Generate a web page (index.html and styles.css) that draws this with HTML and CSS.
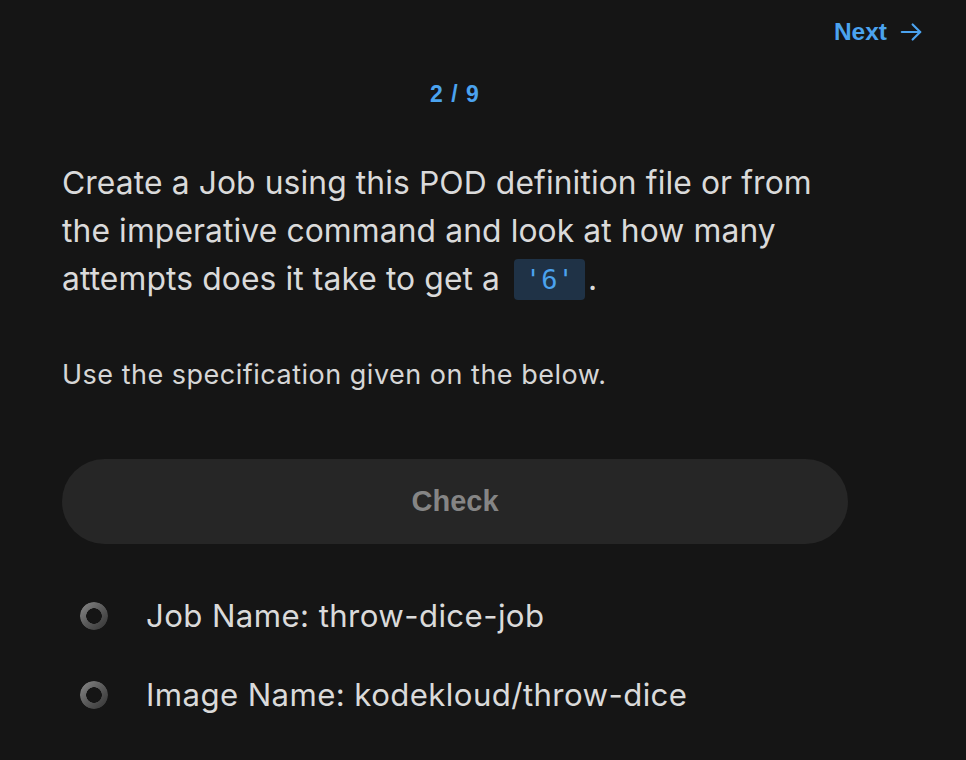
FILE: index.html
```html
<!DOCTYPE html>
<html lang="en">
<head>
<meta charset="utf-8">
<title>Question 2 / 9</title>
<link rel="stylesheet" href="styles.css">
</head>
<body>
<div class="topbar">
  <a class="next" href="#">Next
    <svg class="arrow" width="26" height="26" viewBox="0 0 24 24" fill="none" stroke="currentColor" stroke-width="2" stroke-linecap="round" stroke-linejoin="round"><path d="M3.5 12h17"/><path d="M13.5 5l7 7-7 7"/></svg>
  </a>
</div>
<main class="content">
  <div class="counter">2 / 9</div>
  <p class="question">Create a Job using this POD definition file or from the imperative command and look at how many attempts does it take to get a <code class="chip">'6'</code>.</p>
  <p class="note">Use the specification given on the below.</p>
  <button class="check" type="button">Check</button>
  <ul class="tasks">
    <li class="task"><span class="ring"></span><span>Job Name: throw-dice-job</span></li>
    <li class="task"><span class="ring"></span><span>Image Name: kodekloud/throw-dice</span></li>
  </ul>
</main>
</body>
</html>
```

FILE: styles.css
```css
html, body {
  margin: 0;
  padding: 0;
  background: #151515;
  height: 100%;
}
body {
  font-family: Inter, "Noto Sans", sans-serif;
  color: #d9d9d9;
  overflow: hidden;
}
.topbar {
  display: flex;
  justify-content: flex-end;
  padding: 16px 42px 0 0;
  height: 32px;
}
.next {
  display: flex;
  align-items: center;
  gap: 11px;
  color: #4ba3ef;
  text-decoration: none;
  font-family: "Liberation Sans", Arial, sans-serif;
  font-weight: 700;
  font-size: 24.5px;
}
.content {
  width: 786px;
  margin-left: 62px;
}
.counter {
  margin-top: 33px;
  text-align: center;
  color: #4ba3ef;
  font-family: "Liberation Sans", Arial, sans-serif;
  font-weight: 700;
  font-size: 23px;
  letter-spacing: 1px;
}
.question {
  margin: 51px 0 0 0;
  font-size: 31.8px;
  letter-spacing: 0.1px;
  line-height: 48px;
  color: #dadada;
}
.chip {
  display: inline-block;
  margin: 0 3px 0 5px;
  background: #1f3246;
  color: #4ba3ef;
  font-family: "DejaVu Sans Mono", monospace;
  font-size: 27px;
  letter-spacing: 0;
  line-height: 41px;
  padding: 0 11px;
  border-radius: 4px;
  vertical-align: 1px;
}
.note {
  margin: 54px 0 0 0;
  font-size: 27px;
  letter-spacing: 0.5px;
  line-height: 36px;
  color: #d6d6d6;
}
.check {
  display: block;
  width: 786px;
  height: 85px;
  margin-top: 66px;
  border: none;
  border-radius: 43px;
  background: #262626;
  color: #858585;
  font-family: "Liberation Sans", Arial, sans-serif;
  font-weight: 700;
  font-size: 29px;
}
.tasks {
  list-style: none;
  margin: 48px 0 0 0;
  padding: 0;
}
.task {
  display: flex;
  align-items: center;
  gap: 38px;
  height: 48px;
  margin-bottom: 31px;
  padding-left: 18px;
  font-size: 31.2px;
  letter-spacing: 0.4px;
  color: #dadada;
}
.ring {
  flex: none;
  width: 28px;
  height: 28px;
  border-radius: 50%;
  background: linear-gradient(135deg, #8a8a8a 0%, #5a5a5a 50%, #333333 100%);
  -webkit-mask: radial-gradient(circle, transparent 7.5px, #000 8px);
  mask: radial-gradient(circle, transparent 7.5px, #000 8px);
}
```
